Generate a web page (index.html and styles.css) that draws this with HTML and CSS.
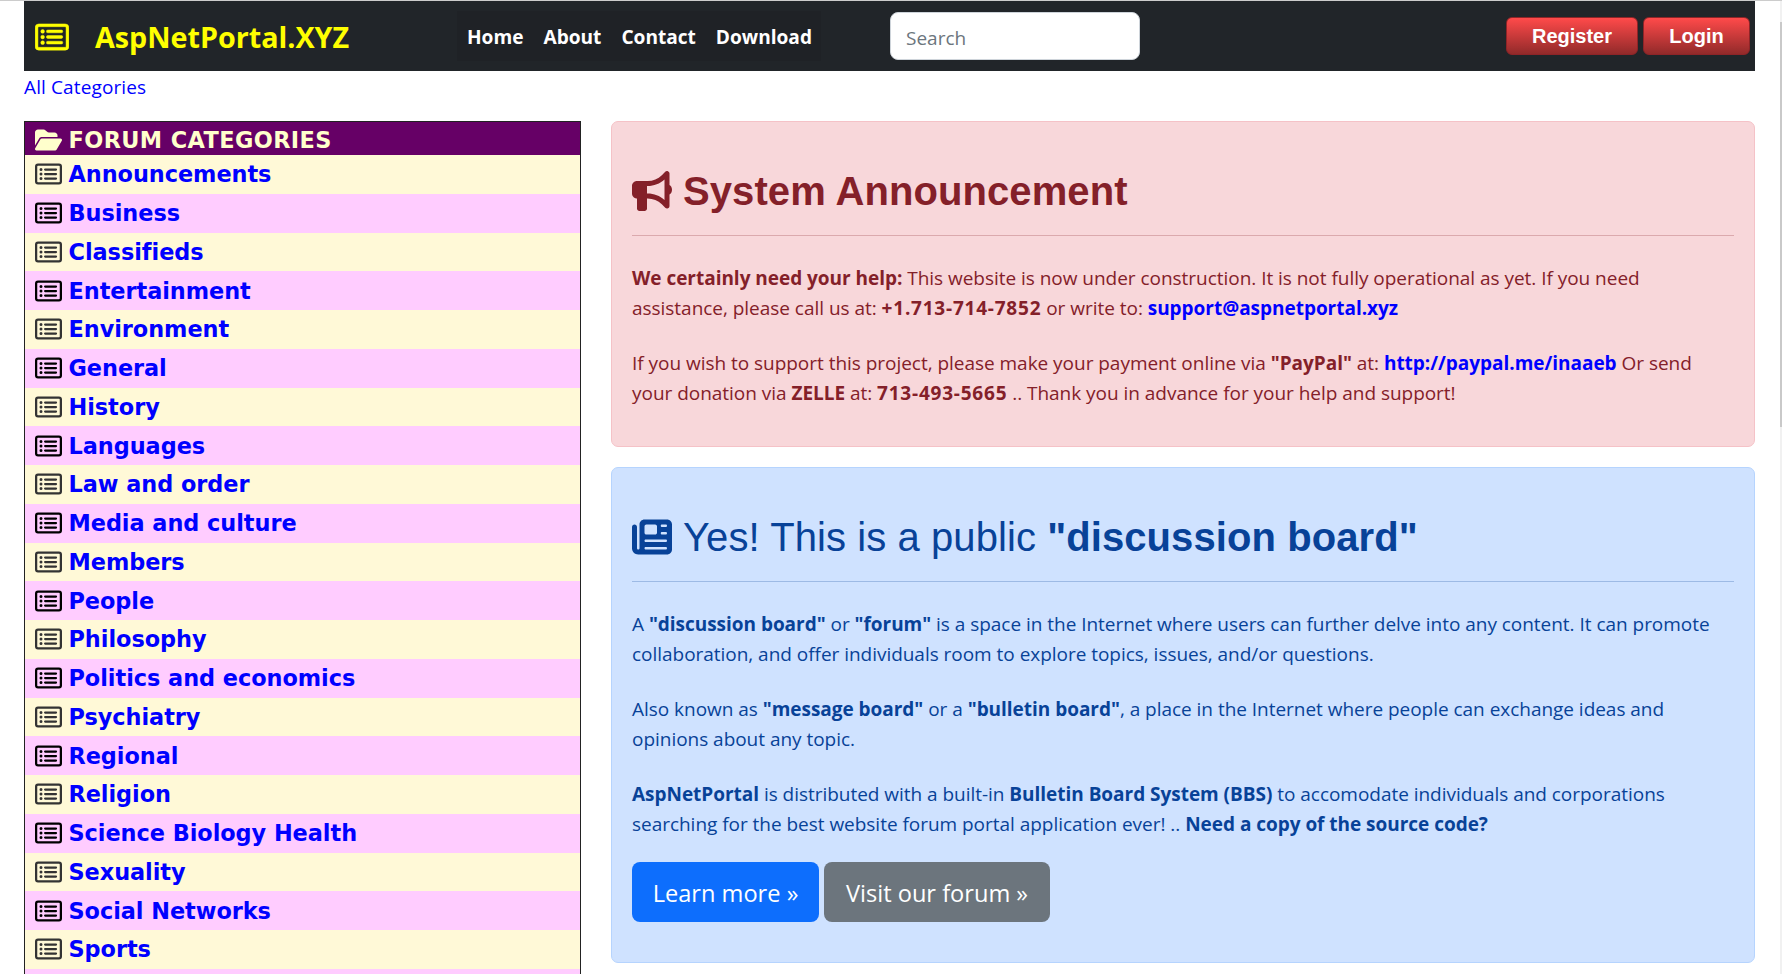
FILE: index.html
```html
<!DOCTYPE html>
<html lang="en">
<head>
<meta charset="utf-8">
<title>AspNetPortal.XYZ</title>
<link rel="stylesheet" href="styles.css">
</head>
<body>
<svg class="defs" width="0" height="0">
  <symbol id="list" viewBox="0 0 576 512"><path fill-rule="evenodd" d="M64 32h448a64 64 0 0 1 64 64v320a64 64 0 0 1-64 64H64a64 64 0 0 1-64-64V96a64 64 0 0 1 64-64zm0 48a16 16 0 0 0-16 16v320a16 16 0 0 0 16 16h448a16 16 0 0 0 16-16V96a16 16 0 0 0-16-16zM128 128a32 32 0 1 1 0 64 32 32 0 1 1 0-64zm0 96a32 32 0 1 1 0 64 32 32 0 1 1 0-64zm0 96a32 32 0 1 1 0 64 32 32 0 1 1 0-64zM216 136h232a24 24 0 1 1 0 48H216a24 24 0 1 1 0-48zm0 96h232a24 24 0 1 1 0 48H216a24 24 0 1 1 0-48zm0 96h232a24 24 0 1 1 0 48H216a24 24 0 1 1 0-48z"/></symbol>
  <symbol id="folder" viewBox="0 0 576 512"><path d="M88.7 223.8L0 375.800V96C0 60.700 28.700 32 64 32h117.500c17 0 33.300 6.700 45.300 18.700l26.500 26.500c12 12 28.300 18.700 45.300 18.700H416c35.300 0 64 28.700 64 64v32H144c-22.800 0-43.800 12.100-55.300 31.800zm27.600 16.100C122.100 230 132.600 224 144 224h400c11.500 0 22 6.100 27.700 16.100s5.700 22.200-.1 32.100l-112 192C453.900 474 443.400 480 432 480H32c-11.500 0-22-6.100-27.700-16.100s-5.700-22.200.1-32.100z"/></symbol>
  <symbol id="horn" viewBox="0 0 512 512"><path d="M480 32c0-12.900-7.800-24.600-19.800-29.600s-25.700-2.200-34.900 6.900L381.700 53c-48 48-113.100 75-181 75H64c-35.300 0-64 28.700-64 64v96c0 35.300 28.700 64 64 64v128c0 17.700 14.300 32 32 32h64c17.700 0 32-14.300 32-32V352h8.700c67.900 0 133 27 181 75l43.600 43.600c9.200 9.200 22.900 11.900 34.900 6.900s19.800-16.600 19.800-29.600V300.400c18.600-8.800 32-32.500 32-60.400s-13.400-51.600-32-60.400zm-64 76.700V371.300C357.200 317.800 280.500 288 200.700 288H192v-96h8.700c79.800 0 156.500-29.800 215.300-83.300z"/></symbol>
  <symbol id="news" viewBox="0 0 512 512"><path fill-rule="evenodd" d="M96 96c0-35.300 28.700-64 64-64h288c35.300 0 64 28.700 64 64v320c0 35.300-28.700 64-64 64H80c-44.200 0-80-35.800-80-80V128c0-17.700 14.300-32 32-32s32 14.300 32 32v272c0 8.800 7.200 16 16 16s16-7.200 16-16zm64 24v80c0 13.300 10.700 24 24 24h112c13.300 0 24-10.700 24-24v-80c0-13.300-10.700-24-24-24H184c-13.300 0-24 10.700-24 24zm208-8c0 8.800 7.200 16 16 16h48c8.800 0 16-7.200 16-16s-7.200-16-16-16h-48c-8.800 0-16 7.200-16 16zm0 96c0 8.800 7.200 16 16 16h48c8.800 0 16-7.200 16-16s-7.200-16-16-16h-48c-8.800 0-16 7.200-16 16zM160 304c0 8.800 7.200 16 16 16h256c8.800 0 16-7.200 16-16s-7.200-16-16-16H176c-8.800 0-16 7.200-16 16zm0 96c0 8.800 7.200 16 16 16h256c8.800 0 16-7.200 16-16s-7.200-16-16-16H176c-8.800 0-16 7.200-16 16z"/></symbol>
</svg>
<header class="bar">
  <a class="brand"><svg class="logo"><use href="#list"/></svg><span>AspNetPortal.XYZ</span></a>
  <nav class="nav"><a>Home</a><a>About</a><a>Contact</a><a>Download</a></nav>
  <input class="search" placeholder="Search">
  <div class="account"><a class="pill register">Register</a><a class="pill login">Login</a></div>
</header>
<div class="crumb"><a>All Categories</a></div>
<main class="main">
  <aside class="cats">
    <h2><svg><use href="#folder"/></svg>FORUM CATEGORIES</h2>
    <ul>
      <li><svg><use href="#list"/></svg>Announcements</li>
      <li><svg><use href="#list"/></svg>Business</li>
      <li><svg><use href="#list"/></svg>Classifieds</li>
      <li><svg><use href="#list"/></svg>Entertainment</li>
      <li><svg><use href="#list"/></svg>Environment</li>
      <li><svg><use href="#list"/></svg>General</li>
      <li><svg><use href="#list"/></svg>History</li>
      <li><svg><use href="#list"/></svg>Languages</li>
      <li><svg><use href="#list"/></svg>Law and order</li>
      <li><svg><use href="#list"/></svg>Media and culture</li>
      <li><svg><use href="#list"/></svg>Members</li>
      <li><svg><use href="#list"/></svg>People</li>
      <li><svg><use href="#list"/></svg>Philosophy</li>
      <li><svg><use href="#list"/></svg>Politics and economics</li>
      <li><svg><use href="#list"/></svg>Psychiatry</li>
      <li><svg><use href="#list"/></svg>Regional</li>
      <li><svg><use href="#list"/></svg>Religion</li>
      <li><svg><use href="#list"/></svg>Science Biology Health</li>
      <li><svg><use href="#list"/></svg>Sexuality</li>
      <li><svg><use href="#list"/></svg>Social Networks</li>
      <li><svg><use href="#list"/></svg>Sports</li>
      <li></li>
    </ul>
  </aside>
  <div class="cards">
    <section class="card danger">
      <h1><svg><use href="#horn"/></svg><b>System Announcement</b></h1>
      <hr>
      <p><b>We certainly need your help:</b> This website is now under construction. It is not fully operational as yet. If you need<br>assistance, please call us at: <b class="num">+1.713-714-7852</b> or write to: <a>support@aspnetportal.xyz</a></p>
      <p>If you wish to support this project, please make your payment online via <b>"PayPal"</b> at: <a>http://paypal.me/inaaeb</a> Or send<br>your donation via <b>ZELLE</b> at: <b class="num">713-493-5665</b> .. Thank you in advance for your help and support!</p>
    </section>
    <section class="card primary">
      <h1><svg><use href="#news"/></svg>Yes! This is a public <b>"discussion board"</b></h1>
      <hr>
      <p>A <b>"discussion board"</b> or <b>"forum"</b> is a space in the Internet where users can further delve into any content. It can promote<br>collaboration, and offer individuals room to explore topics, issues, and/or questions.</p>
      <p>Also known as <b>"message board"</b> or a <b>"bulletin board"</b>, a place in the Internet where people can exchange ideas and<br>opinions about any topic.</p>
      <p><b>AspNetPortal</b> is distributed with a built-in <b>Bulletin Board System (BBS)</b> to accomodate individuals and corporations<br>searching for the best website forum portal application ever! .. <b>Need a copy of the source code?</b></p>
      <div class="actions"><a class="btn learn">Learn more »</a><a class="btn visit">Visit our forum »</a></div>
    </section>
  </div>
</main>
<div class="scroll"></div>
</body>
</html>
```
FILE: styles.css
```css
* { box-sizing: border-box; }
html { overflow: hidden; }
body { margin: 0; height: 974px; padding: 0 27px 0 24px; overflow: hidden; border-top: 1px solid #ccc; background: #fff; color: #212529; font: 19px/30px "Open Sans", "Noto Sans", sans-serif; white-space: nowrap; }
a { color: #00f; text-decoration: none; }
svg { fill: currentColor; flex: none; }
.defs { position: absolute; }
.bar { display: flex; align-items: center; height: 70px; background: #212529; }
.brand { display: flex; align-items: center; width: 433px; padding: 2px 0 0 11px; color: #ff0; font-size: 28.7px; font-weight: 700; }
.logo { width: 34px; height: 30px; margin-right: 26px; stroke: currentColor; stroke-width: 8px; }
.nav { display: flex; gap: 20px; align-items: center; width: 364px; height: 50px; padding: 2px 0 0 10px; background: #1f2226; font-weight: 700; font-size: 19.1px; }
.nav a { color: #fff; }
.search { width: 250px; height: 48px; margin-left: 69px; padding: 3px 15px 0; border: 1px solid #ced4da; border-radius: 8px; background: #fff; font: 19px "Open Sans", sans-serif; }
.search::placeholder { color: #6c757d; opacity: 1; }
.account { display: flex; gap: 5px; margin: 0 5px 0 auto; }
.pill { height: 38px; border: 1px solid #8f2427; border-radius: 6px; background: linear-gradient(#ff4a4a, #922a2a); color: #fff; font: 700 20px/36px "Liberation Sans", Arial, sans-serif; text-align: center; }
.register { width: 132px; }
.login { width: 107px; }
.crumb { height: 50px; padding-top: 1px; letter-spacing: .12px; }
.main { display: flex; gap: 30px; align-items: flex-start; }
.cats { width: 557px; border: 1px solid #222; font: 700 22.4px "DejaVu Sans", Verdana, sans-serif; letter-spacing: -.04px; }
.cats svg { width: 27px; height: 24px; margin-right: 6.5px; }
.cats h2 { display: flex; align-items: center; height: 33px; margin: 0; padding: 2px 10px 0; background: #606; color: #ffc; font-size: inherit; letter-spacing: .4px; }
.cats ul { margin: 0; padding: 0; list-style: none; }
.cats li { display: flex; align-items: center; height: 38.76px; padding-left: 10px; background: #fff9d7; color: #00f; }
.cats li svg { color: #333; }
.cats li:nth-child(even) { background: #fcf; }
.cats li:nth-child(even) svg { color: #000; }
.cards { flex: 1; display: flex; flex-direction: column; gap: 20px; }
.card { padding: 45px 20px 0; border: 1px solid; border-radius: 7px; }
.danger { height: 326px; background: #f8d7da; border-color: #f5c2c7; color: #842029; }
.primary { height: 496px; background: #cfe2ff; border-color: #b6d4fe; color: #084298; }
.card h1 { display: flex; align-items: center; height: 48px; margin: 0; white-space: pre; font: 400 40px/48px "Liberation Sans", Arial, sans-serif; letter-spacing: .08px; }
.card h1 svg { width: 40px; height: 40px; margin-right: 11px; }
.card hr { height: 1px; margin: 20px 0 27px; border: 0; color: inherit; background: currentColor; opacity: .25; }
.card p { margin: 0 0 25px; letter-spacing: -.03px; }
.card p a { font-weight: 700; }
.card p .num { letter-spacing: .78px; }
.actions { display: flex; gap: 5px; margin-top: -2px; }
.btn { height: 60px; border-radius: 8px; color: #fff; font-size: 23.6px; line-height: 62px; text-align: center; }
.learn { width: 187px; background: #0d6efd; }
.visit { width: 226px; background: #6c757d; }
.scroll { position: absolute; right: 0; top: 1px; width: 2px; height: 973px; background: linear-gradient(#f1f1f1 21px, #c9c9c9 21px, #c9c9c9 426px, #f1f1f1 426px); }
```
